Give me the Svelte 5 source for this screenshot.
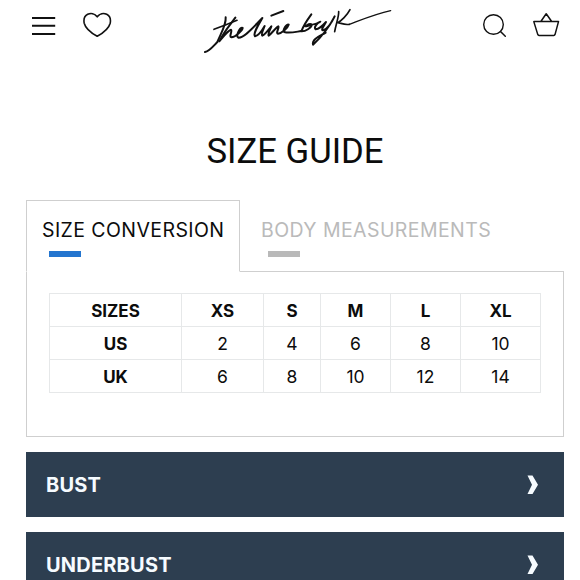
<script>
    let tabs = ["SIZE CONVERSION", "BODY MEASUREMENTS"]
    let active = $state(0)

    let sizes = ["SIZES", "XS", "S", "M", "L", "XL"]
    let rows = [
        ["US", 2, 4, 6, 8, 10],
        ["UK", 6, 8, 10, 12, 14]
    ]

    let sections = ["BUST", "UNDERBUST"]
</script>

<div class="page">
    <header>
        <button class="icon menu" aria-label="Menu">
            <svg width="24" height="20" viewBox="0 0 24 20"><path d="M0 2H23.2M0 9.8H23.2M0 18H23.2" stroke-width="2" /></svg>
        </button>
        <button class="icon heart" aria-label="Wishlist">
            <svg width="30" height="28" viewBox="0 0 30 28"><path d="M14.2 4.8C16.7 1.4 20.7 .9 23.7 2.3C26.7 3.8 27.9 7.5 27.2 11.2C25.7 17 19.7 21.2 14.2 24.3C8.7 21.2 2.7 17 1.2 11.2C.5 7.5 1.7 3.8 4.7 2.3C7.7 .9 11.7 1.4 14.2 4.8Z" stroke-width="1.6" /></svg>
        </button>
        <a class="logo" href="#home" aria-label="thelinebyk">
            <svg width="205" height="65" viewBox="0 0 615 195">
                <path d="M92 52C94 74 79 97 67 126C54 139 43 154 30 156" stroke-width="6" />
                <path d="M57 88L93 74L126 61" stroke-width="5" />
                <path d="M121 53C105 75 88 93 73 124C84 111 100 90 108 89C113 93 101 110 109 112C121 111 143 91 143 84C135 81 121 107 130 113C149 114 178 78 202 54C190 75 173 101 180 109C190 107 201 92 209 78C204 91 197 104 202 107C212 103 221 88 229 79C226 88 217 103 221 107C230 101 242 83 250 79C254 83 241 99 249 101C261 100 278 84 281 74C275 70 262 90 268 96C282 101 300 96 319 93" stroke-width="6" />
                <path d="M229 47L265 33" stroke-width="6" />
                <path d="M349 43C338 58 325 77 319 94C331 95 350 83 350 74C346 69 337 74 331 79C343 76 370 71 376 65C367 67 355 83 362 88C372 87 386 74 393 66C386 79 377 90 384 91C397 87 409 70 419 49C402 82 376 114 354 134C350 117 376 108 392 98" stroke-width="6" />
                <path d="M431 35C432 51 422 75 419 95" stroke-width="5" />
                <path d="M465 29C457 45 438 63 428 68C436 68 447 76 463 73" stroke-width="5" />
                <path d="M463 73C498 60 541 42 587 32" stroke-width="4" />
            </svg>
        </a>
        <button class="icon search" aria-label="Search">
            <svg width="25" height="25" viewBox="0 0 25 25"><circle cx="10.5" cy="10.5" r="9.8" stroke-width="1.4" /><path d="M17.5 17.5L22.3 22.2" stroke-width="1.5" /></svg>
        </button>
        <button class="icon basket" aria-label="Basket">
            <svg width="28" height="25" viewBox="0 0 28 25"><path d="M1.8 9.6H26.5L23 22.6Q22.7 23.5 21.8 23.5H7Q6.1 23.5 5.8 22.6ZM9 9.2L14.2 1.8L19.5 9.2" stroke-width="1.5" /></svg>
        </button>
    </header>

    <h1>SIZE GUIDE</h1>

    <div class="tabs">
        {#each tabs as tab, i}
            <button class="tab" class:active={active == i} onclick={() => active = i}>{tab}</button>
        {/each}
    </div>

    <div class="panel">
        <table>
            <colgroup>
                <col class="first" /><col class="xs" /><col class="s" /><col class="m" /><col class="l" /><col class="xl" />
            </colgroup>
            <thead>
                <tr>
                    {#each sizes as size}
                        <th>{size}</th>
                    {/each}
                </tr>
            </thead>
            <tbody>
                {#each rows as row}
                    <tr>
                        {#each row as cell, i}
                            {#if i == 0}
                                <th>{cell}</th>
                            {:else}
                                <td>{cell}</td>
                            {/if}
                        {/each}
                    </tr>
                {/each}
            </tbody>
        </table>
    </div>

    {#each sections as section}
        <button class="section">
            <span>{section}</span>
            <svg width="12" height="20" viewBox="0 0 12 20"><path d="M.5 .5H5.5L11 9.8L5.5 19H.5L5 9.8Z" /></svg>
        </button>
    {/each}
</div>

<style>
    :global(body) {
        margin: 0;
        overflow: hidden;
        background-color: white;
    }

    .page {
        box-sizing: border-box;
        height: 580px;
        overflow: hidden;
        padding: 0 16px 0 26px;
        font-family: Inter, "Liberation Sans", sans-serif;
        color: #0c0c0c;
    }

    button {
        padding: 0;
        border: none;
        background: none;
        font-family: inherit;
        color: inherit;
    }

    svg {
        display: block;
    }

    header {
        display: flex;
        align-items: flex-start;
        height: 65px;
    }

    .icon svg, .logo svg {
        fill: none;
        stroke: #111;
        stroke-linecap: round;
        stroke-linejoin: round;
    }

    .icon.menu svg {
        stroke-linecap: butt;
    }

    .menu {
        margin: 16px 0 0 6px;
    }

    .heart {
        margin: 12px 0 0 27px;
    }

    .logo {
        margin-left: 82px;
    }

    .search {
        margin: 14px 0 0 83px;
    }

    .basket {
        margin: 12px 0 0 24px;
    }

    h1 {
        margin: 65px 0 0;
        height: 42px;
        line-height: 42px;
        text-align: center;
        font-family: Roboto, sans-serif;
        font-size: 34.7px;
        font-weight: 400;
    }

    .tabs {
        display: flex;
        margin-top: 28px;
    }

    .tab {
        box-sizing: border-box;
        height: 72px;
        padding: 3px 14px 0 20px;
        border: 1px solid transparent;
        text-align: left;
        font-size: 19.5px;
        line-height: 23px;
        letter-spacing: 0.42px;
        color: #bababa;
    }

    .tab::after {
        content: "";
        display: block;
        width: 32px;
        height: 6px;
        margin: 9px 0 0 7px;
        background-color: #b9b9b9;
    }

    .tab.active {
        width: 214px;
        padding-left: 15px;
        border-color: #cfcfcf;
        border-bottom-color: white;
        color: #0c0c0c;
        z-index: 1;
    }

    .tab.active::after {
        background-color: #2375cf;
    }

    .panel {
        box-sizing: border-box;
        height: 166px;
        margin-top: -1px;
        padding: 21px 22px 0;
        border: 1px solid #cfcfcf;
    }

    table {
        width: 491px;
        table-layout: fixed;
        border-collapse: collapse;
        font-size: 17.5px;
    }

    .first { width: 132px; }
    .xs { width: 82px; }
    .s { width: 57px; }
    .m { width: 70px; }
    .l { width: 70px; }
    .xl { width: 80px; }

    th, td {
        box-sizing: border-box;
        height: 33px;
        padding: 2px 0 0;
        border: 1px solid #e6e8e9;
        text-align: center;
        line-height: 20px;
    }

    th {
        font-size: 17px;
        font-weight: 700;
    }

    .section {
        box-sizing: border-box;
        display: flex;
        align-items: center;
        justify-content: space-between;
        width: 100%;
        height: 65px;
        margin-top: 15px;
        padding: 0 25px 0 20px;
        background-color: #2d3e50;
        font-size: 20px;
        font-weight: 700;
        letter-spacing: 0.2px;
        color: #f6fbff;
    }

    .section svg {
        fill: #f6fbff;
    }
</style>
